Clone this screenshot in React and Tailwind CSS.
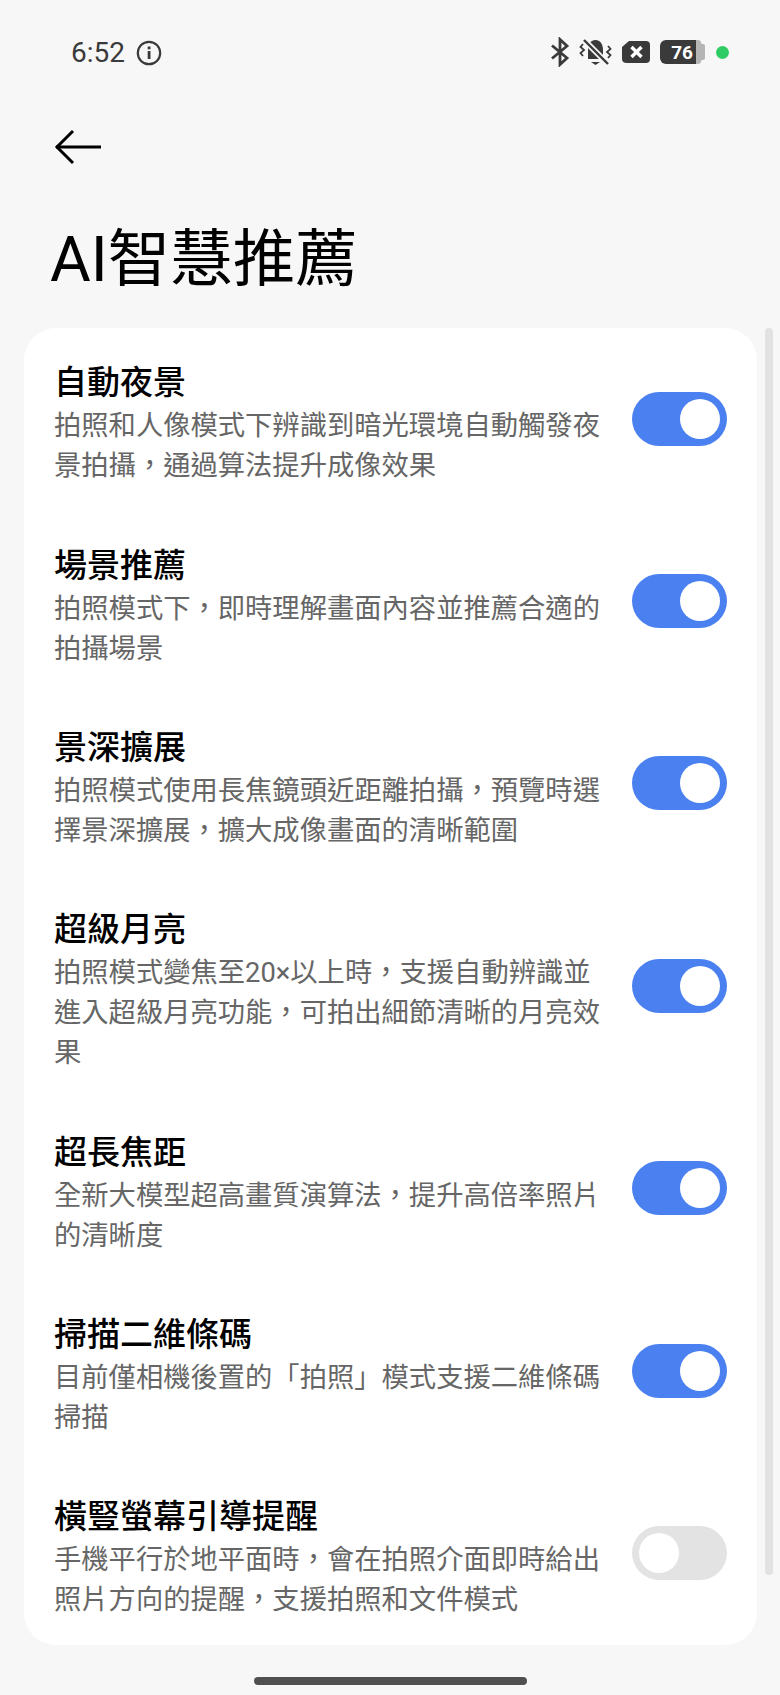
const cjk = { fontFamily: 'Roboto, "Noto Sans CJK TC", "Noto Sans CJK SC", sans-serif' };

const rows = [
  { t: "自動夜景", d: ["拍照和人像模式下辨識到暗光環境自動觸發夜", "景拍攝，通過算法提升成像效果"], on: true },
  { t: "場景推薦", d: ["拍照模式下，即時理解畫面內容並推薦合適的", "拍攝場景"], on: true },
  { t: "景深擴展", d: ["拍照模式使用長焦鏡頭近距離拍攝，預覽時選", "擇景深擴展，擴大成像畫面的清晰範圍"], on: true },
  { t: "超級月亮", d: ["拍照模式變焦至20×以上時，支援自動辨識並", "進入超級月亮功能，可拍出細節清晰的月亮效", "果"], on: true },
  { t: "超長焦距", d: ["全新大模型超高畫質演算法，提升高倍率照片", "的清晰度"], on: true },
  { t: "掃描二維條碼", d: ["目前僅相機後置的「拍照」模式支援二維條碼", "掃描"], on: true },
  { t: "橫豎螢幕引導提醒", d: ["手機平行於地平面時，會在拍照介面即時給出", "照片方向的提醒，支援拍照和文件模式"], on: false },
];

function Toggle({ on }) {
  return (
    <div className={`mb-[9px] flex h-[54px] w-[95px] shrink-0 items-center rounded-full px-[7px] ${on ? "justify-end bg-[#4a80f0]" : "justify-start bg-[#e3e3e3]"}`}>
      <div className="h-[40px] w-[40px] rounded-full bg-white" />
    </div>
  );
}

function Row({ t, d, on }) {
  return (
    <div className="flex items-center justify-between py-[28.2px] pl-[30px] pr-[30px] last:pb-[25px]">
      <div className="w-[560px]">
        <div className="text-[33px] font-medium leading-[46px] text-black">{t}</div>
        {d.map((l) => (
          <div key={l} className="whitespace-nowrap text-[27.3px] leading-[40px] text-[#666666]">{l}</div>
        ))}
      </div>
      <Toggle on={on} />
    </div>
  );
}

function StatusIcons() {
  return (
    <div className="flex items-center">
      <svg width="20" height="30" viewBox="0 0 20 30" fill="none" stroke="#3a3a3a" strokeWidth="2.8" strokeLinejoin="miter">
        <path d="M2 8.5 L17 21 L10 27.5 V2.5 L17 9 L2 21.5" />
      </svg>
      <svg className="ml-[9px]" width="33" height="30" viewBox="0 0 33 30" fill="none">
        <path d="M9 22 V13 C9 7 12 3 16.5 3 C21 3 24 7 24 13 V22 Z" fill="#3a3a3a" />
        <path d="M12 25 H21 L16.5 28 Z" fill="#3a3a3a" />
        <path d="M5 3 L29 27" stroke="#f7f7f7" strokeWidth="6" />
        <path d="M5 3 L29 27" stroke="#3a3a3a" strokeWidth="2.4" />
        <path d="M4 7 L1.5 10 L5 13 L1.5 16 L4 19 M29 9 L31.5 12 L28 15 L31.5 18 L29 21" stroke="#3a3a3a" strokeWidth="1.8" />
      </svg>
      <svg className="ml-[9px]" width="30" height="24" viewBox="0 0 30 24">
        <path d="M8 1 H25 Q29 1 29 5 V19 Q29 23 25 23 H6 Q1 23 1 19 V7 Z" fill="#3a3a3a" />
        <path d="M10.5 7 L20.5 17 M20.5 7 L10.5 17" stroke="#fff" strokeWidth="3.4" />
      </svg>
      <div className="ml-[9px] flex h-[24px] w-[36px] items-center justify-end rounded-l-[6px] bg-[#3a3a3a] pr-[3px]" style={{ fontFamily: "Roboto, sans-serif" }}>
        <span className="text-[19px] font-bold leading-none text-white">76</span>
      </div>
      <svg width="9" height="24" viewBox="0 0 9 24">
        <path d="M0 0 H2 Q5 0 5.5 4 H7 Q9 4 9 6 V18 Q9 20 7 20 H5.5 Q5 24 2 24 H0 Z" fill="#b5b5b5" />
      </svg>
      <div className="ml-[11px] h-[13px] w-[13px] rounded-full bg-[#2fcc66]" />
    </div>
  );
}

export default function App() {
  return (
    <div className="relative flex h-[1695px] w-[780px] flex-col overflow-hidden bg-[#f7f7f7]">
      <div className="mt-[26px] flex h-[52px] items-center justify-between pl-[71px] pr-[51px]">
        <div className="flex items-center gap-[11px] pt-[2px]">
          <span className="text-[28px] leading-none text-[#3a3a3a]" style={{ fontFamily: "Roboto, sans-serif" }}>6:52</span>
          <svg width="26" height="26" viewBox="0 0 26 26" fill="none">
            <circle cx="13" cy="13" r="11.2" stroke="#3a3a3a" strokeWidth="2.2" />
            <rect x="11.7" y="11" width="2.8" height="8" fill="#3a3a3a" />
            <rect x="11.7" y="6.5" width="2.8" height="2.8" fill="#3a3a3a" />
          </svg>
        </div>
        <StatusIcons />
      </div>

      <div className="ml-[54px] mt-[51px]">
        <svg width="48" height="36" viewBox="0 0 48 36" fill="none" stroke="#000" strokeWidth="3">
          <path d="M2 18 H47" />
          <path d="M19 2 L3 18 L19 34" />
        </svg>
      </div>

      <div className="ml-[50px] mt-[55px] h-[80px] text-[62.5px] leading-[80px] text-black" style={cjk}>AI智慧推薦</div>

      <div className="relative mx-[24px] mt-[28px]">
        <div className="w-[733px] rounded-[32px] bg-white pb-[0px] pt-[4px]" style={cjk}>
          {rows.map((r) => (
            <Row key={r.t} {...r} />
          ))}
        </div>
        <div className="absolute left-[741px] top-[0px] h-[1247px] w-[8px] rounded-full bg-[#e2e2e2]" />
      </div>

      <div className="absolute bottom-[10px] left-[254px] h-[8px] w-[273px] rounded-full bg-[#505050]" />
    </div>
  );
}
